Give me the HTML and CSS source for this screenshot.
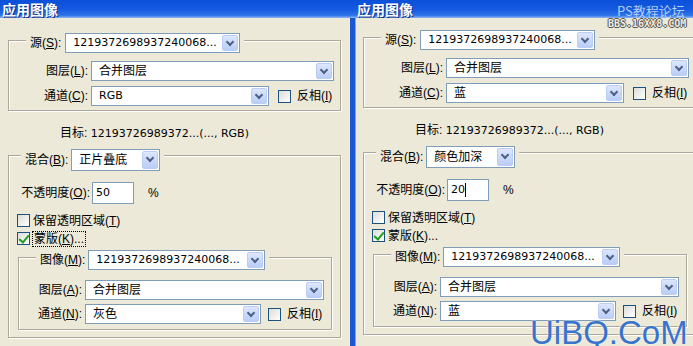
FILE: index.html
```html
<!DOCTYPE html>
<html lang="zh-CN">
<head>
  <meta charset="UTF-8" />
  <title>应用图像</title>
  <link rel="stylesheet" href="styles.css">
</head>
<body>
  <div class="screen">
    <div class="dialog">
      <div class="titlebar">应用图像</div>
      <div class="body">
        <div class="group source">
          <div class="group-head">
            <span class="lbl">源(<u>S</u>):</span>
            <div class="select w-src"><span class="val num">1219372698937240068...</span><i class="drop"></i></div>
          </div>
          <div class="row first">
            <span class="lbl">图层(<u>L</u>):</span>
            <div class="select w-layer"><span class="val">合并图层</span><i class="drop"></i></div>
          </div>
          <div class="row next">
            <span class="lbl">通道(<u>C</u>):</span>
            <div class="select w-chan"><span class="val num">RGB</span><i class="drop"></i></div>
            <span class="chk"></span><span class="chk-text">反相(<u>I</u>)</span>
          </div>
        </div>

        <div class="target">目标: <span class="num">12193726989372...(..., RGB)</span></div>

        <div class="group blend">
          <div class="group-head">
            <span class="lbl">混合(<u>B</u>):</span>
            <div class="select tall w-blend"><span class="val">正片叠底</span><i class="drop"></i></div>
          </div>
          <div class="row opacity">
            <span class="lbl">不透明度(<u>O</u>):</span>
            <div class="input"><span class="num">50</span></div>
            <span class="pct">%</span>
          </div>
          <div class="check-row">
            <span class="chk"></span><span class="chk-text">保留透明区域(<u>T</u>)</span>
          </div>
          <div class="check-row">
            <span class="chk on"></span><span class="chk-text focus">蒙版(<u>K</u>)...</span>
          </div>

          <div class="group mask">
            <div class="group-head">
              <span class="lbl">图像(<u>M</u>):</span>
              <div class="select w-img"><span class="val num">1219372698937240068...</span><i class="drop"></i></div>
            </div>
            <div class="row first">
              <span class="lbl">图层(<u>A</u>):</span>
              <div class="select w-mlayer"><span class="val">合并图层</span><i class="drop"></i></div>
            </div>
            <div class="row next">
              <span class="lbl">通道(<u>N</u>):</span>
              <div class="select w-mchan"><span class="val">灰色</span><i class="drop"></i></div>
              <span class="chk"></span><span class="chk-text">反相(<u>I</u>)</span>
            </div>
          </div>
        </div>
      </div>
    </div>

    <div class="dialog right">
      <div class="titlebar">应用图像</div>
      <div class="body">
        <div class="group source">
          <div class="group-head">
            <span class="lbl">源(<u>S</u>):</span>
            <div class="select w-src"><span class="val num">1219372698937240068...</span><i class="drop"></i></div>
          </div>
          <div class="row first">
            <span class="lbl">图层(<u>L</u>):</span>
            <div class="select w-layer"><span class="val">合并图层</span><i class="drop"></i></div>
          </div>
          <div class="row next">
            <span class="lbl">通道(<u>C</u>):</span>
            <div class="select w-chan"><span class="val">蓝</span><i class="drop"></i></div>
            <span class="chk"></span><span class="chk-text">反相(<u>I</u>)</span>
          </div>
        </div>

        <div class="target">目标: <span class="num">12193726989372...(..., RGB)</span></div>

        <div class="group blend">
          <div class="group-head">
            <span class="lbl">混合(<u>B</u>):</span>
            <div class="select tall w-blend"><span class="val">颜色加深</span><i class="drop"></i></div>
          </div>
          <div class="row opacity">
            <span class="lbl">不透明度(<u>O</u>):</span>
            <div class="input"><span class="num">20</span><span class="caret"></span></div>
            <span class="pct">%</span>
          </div>
          <div class="check-row">
            <span class="chk"></span><span class="chk-text">保留透明区域(<u>T</u>)</span>
          </div>
          <div class="check-row">
            <span class="chk on"></span><span class="chk-text">蒙版(<u>K</u>)...</span>
          </div>

          <div class="group mask">
            <div class="group-head">
              <span class="lbl">图像(<u>M</u>):</span>
              <div class="select w-img"><span class="val num">1219372698937240068...</span><i class="drop"></i></div>
            </div>
            <div class="row first">
              <span class="lbl">图层(<u>A</u>):</span>
              <div class="select w-mlayer"><span class="val">合并图层</span><i class="drop"></i></div>
            </div>
            <div class="row next">
              <span class="lbl">通道(<u>N</u>):</span>
              <div class="select w-mchan"><span class="val">蓝</span><i class="drop"></i></div>
              <span class="chk"></span><span class="chk-text">反相(<u>I</u>)</span>
            </div>
          </div>
        </div>
      </div>
    </div>

    <div class="mark-top">PS教程论坛</div>
    <div class="mark-bbs">BBS.16XX8.COM</div>
    <div class="mark-site">UiBQ.CoM</div>
  </div>
</body>
</html>
```

FILE: styles.css
```css
* {
  margin: 0;
  padding: 0;
  box-sizing: border-box;
}
body {
  width: 693px;
  height: 346px;
  overflow: hidden;
  background: #ece9d8;
  font: 12px/16px "Liberation Sans", "Noto Sans CJK SC", sans-serif;
  color: #000;
}
.screen {
  position: relative;
  display: flex;
  width: 693px;
  height: 346px;
  overflow: hidden;
}
.dialog {
  flex: none;
  width: 350px;
  height: 346px;
  background: #ece9d8;
}
.dialog.right {
  width: 355px;
}
.titlebar {
  height: 18px;
  padding-left: 2px;
  background: linear-gradient(#0a50d9, #1459df 50%, #2c73e8 85%, #8fb4f0);
  color: #fff;
  font: bold 14px/18px "Noto Sans CJK SC", sans-serif;
  text-shadow: 1px 1px 0 #0c2a86;
}
.right .titlebar {
  padding-left: 7px;
}
.body {
  height: 328px;
  padding: 22px 0 0 8px;
}
.right .body {
  padding-top: 19px;
  border-left: 5px solid #1c57cf;
  box-shadow: inset 1px 0 0 #7aa3ea;
}

/* group boxes */
.group {
  border: 1px solid #aca899;
  box-shadow: inset 1px 1px 0 #fff, 1px 1px 0 #fff;
}
.group-head {
  display: flex;
  align-items: center;
  gap: 4px;
  width: max-content;
  padding: 0 4px;
  background: #ece9d8;
}
.source {
  width: 333px;
  padding-bottom: 4px;
}
.source .group-head {
  margin: -8px 0 0 17px;
}
.blend {
  width: 333px;
  margin-top: 14px;
  padding-bottom: 7px;
}
.blend .group-head {
  margin: -7px 0 0 12px;
  gap: 3px;
}
.mask {
  width: 314px;
  margin: 10px 0 0 9px;
  padding-bottom: 5px;
}
.mask .group-head {
  margin: -8px 0 0 17px;
  gap: 3px;
}

.row {
  display: flex;
  align-items: center;
  gap: 3px;
}
.row.first {
  margin-top: 8px;
}
.row.next {
  margin-top: 5px;
}
.mask .row.first {
  margin-top: 10px;
}
.mask .row.next {
  margin-top: 4px;
}
.lbl {
  flex: none;
  white-space: nowrap;
  text-align: right;
}
.source .row .lbl {
  width: 79px;
}
.mask .row .lbl {
  width: 63px;
}
.num {
  font-family: "DejaVu Sans", sans-serif;
  font-size: 11px;
}
u {
  text-decoration: underline;
  text-underline-offset: 1px;
}

/* combo boxes */
.select {
  flex: none;
  display: flex;
  align-items: stretch;
  height: 20px;
  padding: 0 1px 0 7px;
  background: #fff;
  border: 1px solid #7f9db9;
}
.select.tall {
  height: 22px;
}
.select .val {
  flex: 1;
  display: flex;
  align-items: center;
  white-space: nowrap;
  overflow: hidden;
}
.drop {
  position: relative;
  flex: none;
  width: 16px;
  margin: 1px 0;
  border: 1px solid #bccdf5;
  border-radius: 2px;
  background: linear-gradient(#dde7fd, #b9cdf7);
}
.drop::after {
  content: "";
  position: absolute;
  left: 4px;
  top: 3px;
  width: 4px;
  height: 4px;
  border-right: 2px solid #4d6185;
  border-bottom: 2px solid #4d6185;
  transform: rotate(45deg);
}
.w-src { width: 175px; }
.w-layer { width: 243px; }
.w-chan { width: 178px; }
.w-blend { width: 89px; }
.w-img { width: 177px; }
.w-mlayer { width: 239px; }
.w-mchan { width: 176px; }

/* check boxes */
.chk {
  position: relative;
  flex: none;
  width: 13px;
  height: 13px;
  border: 1px solid #1c5180;
  background: linear-gradient(135deg, #dcdcd7, #fff);
}
.row .chk {
  margin-left: 6px;
}
.mask .row .chk {
  margin-left: 4px;
}
.chk.on::after {
  content: "";
  position: absolute;
  left: 3px;
  top: 0;
  width: 4px;
  height: 8px;
  border-right: 2px solid #21a121;
  border-bottom: 2px solid #21a121;
  transform: rotate(40deg);
}
.chk-text {
  margin-left: 3px;
  white-space: nowrap;
}
.check-row {
  display: flex;
  align-items: center;
  height: 17px;
  margin-top: 1px;
  padding-left: 8px;
}
.opacity + .check-row {
  margin-top: 8px;
}
.focus {
  margin-left: 2px;
  padding: 0 1px;
  border: 1px dotted #000;
  line-height: 14px;
}

/* opacity field */
.opacity {
  margin-top: 11px;
  gap: 2px;
}
.opacity .lbl {
  width: 81px;
}
.input {
  display: flex;
  align-items: center;
  width: 42px;
  height: 22px;
  padding-left: 3px;
  background: #fff;
  border: 1px solid #7f9db9;
}
.caret {
  width: 1px;
  height: 14px;
  background: #000;
}
.pct {
  margin-left: 12px;
}

.target {
  height: 16px;
  margin: 14px 0 0 52px;
}

/* watermarks laid over the screenshot */
.mark-top {
  position: absolute;
  left: 617px;
  top: 4px;
  color: #b3cdf6;
  font: 13px/14px "Noto Sans CJK SC", sans-serif;
}
.mark-bbs {
  position: absolute;
  left: 608px;
  top: 19px;
  color: #efecdf;
  font: bold 10px/10px "DejaVu Sans Mono", monospace;
  text-shadow: 1px 0 0 #555, -1px 0 0 #555, 0 1px 0 #555, 0 -1px 0 #555;
}
.mark-site {
  position: absolute;
  left: 530px;
  top: 316px;
  color: #3874cc;
  font: 33px/33px "Liberation Sans", sans-serif;
  text-shadow: 0 0 2px #fff;
}
```
